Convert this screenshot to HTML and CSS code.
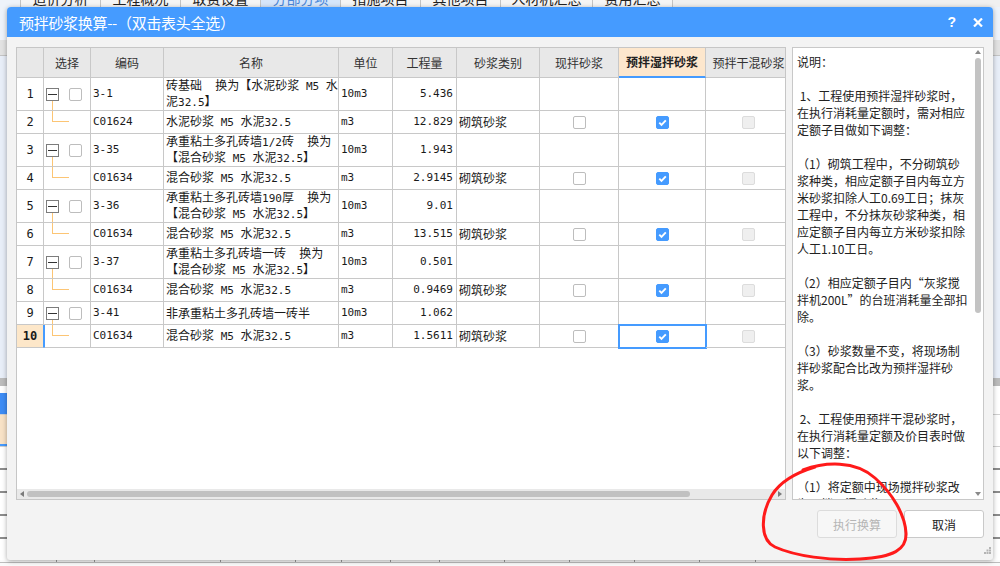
FILE: index.html
```html
<!DOCTYPE html>
<html lang="zh-CN">
<head>
<meta charset="utf-8">
<title>预拌砂浆换算</title>
<link rel="stylesheet" href="styles.css">
</head>
<body>
<div class="app">
  <div class="tabs">
    <div class="tab-row">
      <div class="tab first"></div>
      <div class="tab">造价分析</div>
      <div class="tab">工程概况</div>
      <div class="tab">取费设置</div>
      <div class="tab active">分部分项</div>
      <div class="tab">措施项目</div>
      <div class="tab">其他项目</div>
      <div class="tab wide">人材机汇总</div>
      <div class="tab">费用汇总</div>
      <div class="tab rest"></div>
    </div>
  </div>
  <div class="sheet">
    <div class="band b-top"></div>
    <div class="band b-head"></div>
    <div class="band b-tree"></div>
    <div class="band b-scroll"></div>
    <div class="band b-gap"></div>
    <div class="band b-sel"><div class="b-left"></div></div>
    <div class="band b-peach"><div class="b-left"></div></div>
    <div class="band b-row"></div>
    <div class="band b-row"></div>
    <div class="band b-row"></div>
    <div class="band b-row"></div>
    <div class="band b-row last"></div>
  </div>
  <div class="status">
    <div class="status-cells">
      <span class="sc" style="width:57px"></span>
      <span class="sc" style="width:38px"></span>
      <span class="sc" style="width:126px"></span>
      <span class="sc" style="width:75px"></span>
      <span class="sc" style="width:46px"></span>
      <span class="sc" style="width:49px"></span>
      <span class="sc" style="width:49px"></span>
      <span class="sc" style="width:65px"></span>
      <span class="sc" style="width:65px"></span>
      <span class="sc" style="width:65px"></span>
      <span class="sc" style="width:65px"></span>
      <span class="sc" style="width:56px"></span>
    </div>
  </div>
</div>

<div class="dialog">
  <div class="titlebar">
    <span class="title">预拌砂浆换算--（双击表头全选）</span>
    <span class="help">?</span>
    <svg class="close" width="10" height="9" viewBox="0 0 10 9"><path d="M1 0.5 9 8.5M9 0.5 1 8.5" stroke="#fff" stroke-width="2.2" fill="none"/></svg>
  </div>

  <div class="main">
    <div class="grid-wrap">
      <div class="row head">
        <div class="c"></div>
        <div class="c">选择</div>
        <div class="c">编码</div>
        <div class="c">名称</div>
        <div class="c">单位</div>
        <div class="c">工程量</div>
        <div class="c">砂浆类别</div>
        <div class="c">现拌砂浆</div>
        <div class="c hl">预拌湿拌砂浆</div>
        <div class="c">预拌干混砂浆</div>
      </div>

      <div class="row tall">
        <div class="c num">1</div>
        <div class="c sel parent"><span class="sp"></span><span class="boxes"><span class="minus"></span><span class="cb"></span></span><span class="stem"></span></div>
        <div class="c m">3-1</div>
        <div class="c name"><span class="t">砖基础<span class="en">  </span>换为【水泥砂浆<span class="en"> M5 </span>水<br>泥<span class="en">32.5</span>】</span></div>
        <div class="c m">10m3</div>
        <div class="c m qty">5.436</div>
        <div class="c"></div>
        <div class="c"></div>
        <div class="c"></div>
        <div class="c"></div>
      </div>

      <div class="row">
        <div class="c num">2</div>
        <div class="c sel child"><span class="elbow"></span></div>
        <div class="c m">C01624</div>
        <div class="c name"><span class="t">水泥砂浆<span class="en"> M5 </span>水泥<span class="en">32.5</span></span></div>
        <div class="c m">m3</div>
        <div class="c m qty">12.829</div>
        <div class="c type">砌筑砂浆</div>
        <div class="c chk"><span class="cb"></span></div>
        <div class="c chk"><span class="cb on"><svg width="11" height="11" viewBox="0 0 11 11"><path d="M2.3 5.6 4.5 7.8 8.8 3.3" fill="none" stroke="#fff" stroke-width="1.9"/></svg></span></div>
        <div class="c chk"><span class="cb off"></span></div>
      </div>

      <div class="row tall">
        <div class="c num">3</div>
        <div class="c sel parent"><span class="sp"></span><span class="boxes"><span class="minus"></span><span class="cb"></span></span><span class="stem"></span></div>
        <div class="c m">3-35</div>
        <div class="c name"><span class="t">承重粘土多孔砖墙<span class="en">1/2</span>砖<span class="en">  </span>换为<br>【混合砂浆<span class="en"> M5 </span>水泥<span class="en">32.5</span>】</span></div>
        <div class="c m">10m3</div>
        <div class="c m qty">1.943</div>
        <div class="c"></div>
        <div class="c"></div>
        <div class="c"></div>
        <div class="c"></div>
      </div>

      <div class="row">
        <div class="c num">4</div>
        <div class="c sel child"><span class="elbow"></span></div>
        <div class="c m">C01634</div>
        <div class="c name"><span class="t">混合砂浆<span class="en"> M5 </span>水泥<span class="en">32.5</span></span></div>
        <div class="c m">m3</div>
        <div class="c m qty">2.9145</div>
        <div class="c type">砌筑砂浆</div>
        <div class="c chk"><span class="cb"></span></div>
        <div class="c chk"><span class="cb on"><svg width="11" height="11" viewBox="0 0 11 11"><path d="M2.3 5.6 4.5 7.8 8.8 3.3" fill="none" stroke="#fff" stroke-width="1.9"/></svg></span></div>
        <div class="c chk"><span class="cb off"></span></div>
      </div>

      <div class="row tall">
        <div class="c num">5</div>
        <div class="c sel parent"><span class="sp"></span><span class="boxes"><span class="minus"></span><span class="cb"></span></span><span class="stem"></span></div>
        <div class="c m">3-36</div>
        <div class="c name"><span class="t">承重粘土多孔砖墙<span class="en">190</span>厚<span class="en">  </span>换为<br>【混合砂浆<span class="en"> M5 </span>水泥<span class="en">32.5</span>】</span></div>
        <div class="c m">10m3</div>
        <div class="c m qty">9.01</div>
        <div class="c"></div>
        <div class="c"></div>
        <div class="c"></div>
        <div class="c"></div>
      </div>

      <div class="row">
        <div class="c num">6</div>
        <div class="c sel child"><span class="elbow"></span></div>
        <div class="c m">C01634</div>
        <div class="c name"><span class="t">混合砂浆<span class="en"> M5 </span>水泥<span class="en">32.5</span></span></div>
        <div class="c m">m3</div>
        <div class="c m qty">13.515</div>
        <div class="c type">砌筑砂浆</div>
        <div class="c chk"><span class="cb"></span></div>
        <div class="c chk"><span class="cb on"><svg width="11" height="11" viewBox="0 0 11 11"><path d="M2.3 5.6 4.5 7.8 8.8 3.3" fill="none" stroke="#fff" stroke-width="1.9"/></svg></span></div>
        <div class="c chk"><span class="cb off"></span></div>
      </div>

      <div class="row tall">
        <div class="c num">7</div>
        <div class="c sel parent"><span class="sp"></span><span class="boxes"><span class="minus"></span><span class="cb"></span></span><span class="stem"></span></div>
        <div class="c m">3-37</div>
        <div class="c name"><span class="t">承重粘土多孔砖墙一砖<span class="en">  </span>换为<br>【混合砂浆<span class="en"> M5 </span>水泥<span class="en">32.5</span>】</span></div>
        <div class="c m">10m3</div>
        <div class="c m qty">0.501</div>
        <div class="c"></div>
        <div class="c"></div>
        <div class="c"></div>
        <div class="c"></div>
      </div>

      <div class="row">
        <div class="c num">8</div>
        <div class="c sel child"><span class="elbow"></span></div>
        <div class="c m">C01634</div>
        <div class="c name"><span class="t">混合砂浆<span class="en"> M5 </span>水泥<span class="en">32.5</span></span></div>
        <div class="c m">m3</div>
        <div class="c m qty">0.9469</div>
        <div class="c type">砌筑砂浆</div>
        <div class="c chk"><span class="cb"></span></div>
        <div class="c chk"><span class="cb on"><svg width="11" height="11" viewBox="0 0 11 11"><path d="M2.3 5.6 4.5 7.8 8.8 3.3" fill="none" stroke="#fff" stroke-width="1.9"/></svg></span></div>
        <div class="c chk"><span class="cb off"></span></div>
      </div>

      <div class="row">
        <div class="c num">9</div>
        <div class="c sel parent"><span class="sp"></span><span class="boxes"><span class="minus"></span><span class="cb"></span></span><span class="stem"></span></div>
        <div class="c m">3-41</div>
        <div class="c name"><span class="t">非承重粘土多孔砖墙一砖半</span></div>
        <div class="c m">10m3</div>
        <div class="c m qty">1.062</div>
        <div class="c"></div>
        <div class="c"></div>
        <div class="c"></div>
        <div class="c"></div>
      </div>

      <div class="row current">
        <div class="c num">10</div>
        <div class="c sel child"><span class="elbow"></span></div>
        <div class="c m">C01634</div>
        <div class="c name"><span class="t">混合砂浆<span class="en"> M5 </span>水泥<span class="en">32.5</span></span></div>
        <div class="c m">m3</div>
        <div class="c m qty">1.5611</div>
        <div class="c type">砌筑砂浆</div>
        <div class="c chk"><span class="cb"></span></div>
        <div class="c chk focus"><span class="cb on"><svg width="11" height="11" viewBox="0 0 11 11"><path d="M2.3 5.6 4.5 7.8 8.8 3.3" fill="none" stroke="#fff" stroke-width="1.9"/></svg></span></div>
        <div class="c chk"><span class="cb off"></span></div>
      </div>

      <div class="filler"></div>
      <div class="hscroll">
        <span class="arr-l"></span>
        <span class="hthumb"></span>
        <span class="flex1"></span>
        <span class="arr-r"></span>
      </div>
    </div>

    <div class="notes">
      <div class="notes-text">
        <p>说明：</p>
        <p>&nbsp;1、工程使用预拌湿拌砂浆时，<br>在执行消耗量定额时，需对相应<br>定额子目做如下调整：</p>
        <p>（1）砌筑工程中，不分砌筑砂<br>浆种类，相应定额子目内每立方<br>米砂浆扣除人工0.69工日；抹灰<br>工程中，不分抹灰砂浆种类，相<br>应定额子目内每立方米砂浆扣除<br>人工1.10工日。</p>
        <p>（2）相应定额子目内“灰浆搅<br>拌机200L”的台班消耗量全部扣<br>除。</p>
        <p>（3）砂浆数量不变，将现场制<br>拌砂浆配合比改为预拌湿拌砂<br>浆。</p>
        <p>&nbsp;2、工程使用预拌干混砂浆时，<br>在执行消耗量定额及价目表时做<br>以下调整：</p>
        <p>（1）将定额中现场搅拌砂浆改<br>为预拌干混砂浆。</p>
      </div>
      <div class="vscroll">
        <span class="arr-u"></span>
        <span class="vthumb"></span>
        <span class="flex1"></span>
        <span class="arr-d"></span>
      </div>
    </div>
  </div>

  <div class="actions">
    <button class="btn disabled">执行换算</button>
    <button class="btn">取消</button>
  </div>
  <div class="footer">
    <svg class="grip" width="7" height="7" viewBox="0 0 7 7">
      <rect x="5" y="0" width="2" height="2" fill="#b4b4b4"/>
      <rect x="2.5" y="2.5" width="2" height="2" fill="#b4b4b4"/>
      <rect x="5" y="2.5" width="2" height="2" fill="#b4b4b4"/>
      <rect x="0" y="5" width="2" height="2" fill="#b4b4b4"/>
      <rect x="2.5" y="5" width="2" height="2" fill="#b4b4b4"/>
      <rect x="5" y="5" width="2" height="2" fill="#b4b4b4"/>
    </svg>
  </div>
</div>

<svg class="annot" width="1000" height="566" viewBox="0 0 1000 566">
  <path d="M803 470 C825 462 855 460 875 478 C893 494 905 515 906 533 C907 550 893 557 860 559 C830 561 795 556 775 547 C760 540 760 515 772 495 C780 482 795 473 815 467" fill="none" stroke="#ff1a1a" stroke-width="3" stroke-linecap="round"/>
</svg>
</body>
</html>
```

FILE: styles.css
```css
html, body {
  margin: 0;
  padding: 0;
}
body {
  width: 1000px;
  height: 566px;
  overflow: hidden;
  position: relative;
  font-family: "Noto Sans CJK SC", sans-serif;
  background: #fff;
  color: #1a1a1a;
}

/* ---------- background application ---------- */
.app {
  display: flex;
  flex-direction: column;
  height: 566px;
}
.tabs {
  height: 7px;
  overflow: hidden;
  background: #f0f0f0;
  flex-shrink: 0;
}
.tab-row {
  display: flex;
  margin-top: -12px;
  height: 20px;
}
.tab {
  width: 80px;
  flex-shrink: 0;
  box-sizing: border-box;
  border-right: 1px solid #c4c4c4;
  text-align: center;
  font-size: 14px;
  line-height: 20px;
  color: #222;
  background: #f5f5f5;
}
.tab.first { width: 21px; background: #eef3fa; }
.tab.wide { width: 92px; }
.tab.active { background: #d6e6fa; color: #4a86d8; }
.tab.rest { flex: 1; border-right: 0; background: #f0f0f0; }

.sheet {
  display: flex;
  flex-direction: column;
  flex-shrink: 0;
}
.band { flex-shrink: 0; box-sizing: border-box; }
.b-top { height: 33px; background: #eef3fa; }
.b-head { height: 16px; background: #e2e2e2; border-bottom: 1px solid #c4c4c4; }
.b-tree { height: 322px; background: #e8eef8; }
.b-scroll { height: 8px; background: #bcbcbc; }
.b-gap { height: 7px; background: #fff; }
.b-sel { height: 22px; background: #fff; border-bottom: 1px solid #d0d0d0; }
.b-sel .b-left { width: 60px; height: 100%; background: #3d8cf5; }
.b-peach { height: 32px; background: #fff; border-bottom: 1px solid #d0d0d0; }
.b-peach .b-left {
  width: 60px;
  height: 100%;
  box-sizing: border-box;
  background: #f8e2c6;
  border-bottom: 2px solid #459bff;
}
.b-row { height: 23px; background: #fff; border-bottom: 2px solid #8c8c8c; }
.b-row.last { height: 21px; border-bottom: 0; }

.status {
  height: 6px;
  background: #fafafa;
  flex-shrink: 0;
}
.status-cells {
  display: flex;
  height: 2px;
  border-bottom: 1px solid #bdbdbd;
}
.sc {
  flex-shrink: 0;
  box-sizing: border-box;
  border-right: 1px solid #9a9a9a;
}

/* ---------- dialog window ---------- */
.dialog {
  position: absolute;
  left: 7px;
  top: 7px;
  width: 986px;
  height: 553px;
  background: #f3f3f3;
  border-radius: 4px 4px 3px 3px;
  box-shadow: 0 1px 5px rgba(0, 0, 0, 0.35);
  display: flex;
  flex-direction: column;
  overflow: hidden;
}
.titlebar {
  height: 30px;
  flex-shrink: 0;
  background: #459bff;
  color: #fff;
  display: flex;
  align-items: center;
  padding: 0 10px 0 12px;
}
.title {
  flex: 1;
  font-size: 15px;
  letter-spacing: -0.3px;
}
.help {
  font: bold 14px "Liberation Sans", sans-serif;
  margin-right: 17px;
}
.close { display: block; }

.main {
  display: flex;
  gap: 6px;
  padding: 10px 9px 0;
  height: 453px;
  flex-shrink: 0;
}

/* ---------- grid ---------- */
.grid-wrap {
  width: 770px;
  height: 453px;
  box-sizing: border-box;
  border: 1px solid #c6c6c6;
  background: #fff;
  display: flex;
  flex-direction: column;
  overflow: hidden;
  flex-shrink: 0;
}
.row {
  display: grid;
  grid-template-columns: 27px 47px 73px 175px 54px 64px 83px 79px 87px 86px;
  width: 775px;
  height: 23px;
  flex-shrink: 0;
  font-size: 12px;
  line-height: 14px;
}
.row.tall { height: 33px; }
.row.head { height: 30px; background: #e8e8e8; color: #333; }
.c {
  box-sizing: border-box;
  border-right: 1px solid #c8c8c8;
  border-bottom: 1px solid #c8c8c8;
  display: flex;
  align-items: center;
  padding: 0 2px;
  overflow: hidden;
  white-space: nowrap;
}
.head .c { justify-content: center; padding: 0; }
.head .c.hl {
  background: #fde7cd;
  font-weight: bold;
  color: #222;
  border-bottom: 2px solid #459bff;
}
.m {
  font-family: "DejaVu Sans Mono", monospace;
  font-size: 11px;
}
.en {
  font-family: "DejaVu Sans Mono", monospace;
  font-size: 11px;
  white-space: pre;
}
.num {
  justify-content: center;
  font-family: "DejaVu Sans Mono", monospace;
  font-size: 12px;
}
.qty { justify-content: flex-end; padding-right: 3px; }
.name .t { display: block; }
.chk { justify-content: center; }

.current .num {
  background: #fde7c9;
  font-weight: bold;
  border-right-color: #459bff;
}
.current .sel { border-left: 1px solid #459bff; }
.current .sel .elbow { margin-left: 7px; }
.chk.focus {
  outline: 2px solid #459bff;
  outline-offset: -1px;
}

/* select column: tree */
.sel { padding: 0; align-items: stretch; }
.sel.parent {
  flex-direction: column;
  padding-left: 2px;
}
.sel.parent .sp, .sel.parent .stem { flex: 1; }
.sel.parent .stem {
  width: 0;
  margin-left: 6px;
  border-left: 1px solid #fcc574;
}
.boxes {
  display: flex;
  height: 13px;
  flex-shrink: 0;
}
.minus {
  width: 13px;
  height: 13px;
  box-sizing: border-box;
  border: 1px solid #7c7c7c;
  background: #fff;
  display: flex;
  align-items: center;
  justify-content: center;
}
.minus::before {
  content: "";
  width: 9px;
  height: 1px;
  background: #333;
}
.boxes .cb { margin-left: 10px; }
.sel.child { align-items: flex-start; }
.elbow {
  display: block;
  box-sizing: border-box;
  margin-left: 8px;
  width: 17px;
  height: 11px;
  border-left: 1px solid #fcc574;
  border-bottom: 1px solid #fcc574;
}

/* checkboxes */
.cb {
  width: 13px;
  height: 13px;
  box-sizing: border-box;
  border: 1px solid #bdbdbd;
  border-radius: 2px;
  background: #fff;
  display: flex;
  align-items: center;
  justify-content: center;
  flex-shrink: 0;
}
.cb.on { background: #459bff; border-color: #459bff; }
.cb.off { background: #efefef; border-color: #dcdcdc; }
.cb svg { display: block; }

.filler { flex: 1; }
.flex1 { flex: 1; }

/* horizontal scrollbar */
.hscroll {
  height: 10px;
  flex-shrink: 0;
  background: #e9e9e9;
  display: flex;
  align-items: center;
  padding: 0 3px;
}
.arr-l {
  width: 0;
  height: 0;
  border-top: 3.5px solid transparent;
  border-bottom: 3.5px solid transparent;
  border-right: 4px solid #7a7a7a;
}
.arr-r {
  width: 0;
  height: 0;
  border-top: 3.5px solid transparent;
  border-bottom: 3.5px solid transparent;
  border-left: 4px solid #7a7a7a;
}
.hthumb {
  margin-left: 3px;
  width: 663px;
  height: 6px;
  border-radius: 3px;
  background: #c1c1c1;
}

/* ---------- notes panel ---------- */
.notes {
  width: 192px;
  height: 453px;
  box-sizing: border-box;
  border: 1px solid #c8c8c8;
  background: #fff;
  display: flex;
  flex-shrink: 0;
}
.notes-text {
  flex: 1;
  overflow: hidden;
  padding: 5px 0 0 4px;
  font-size: 12px;
  line-height: 17px;
  color: #222;
  white-space: nowrap;
}
.notes-text p { margin: 0 0 17px; }
.vscroll {
  width: 11px;
  flex-shrink: 0;
  display: flex;
  flex-direction: column;
  align-items: center;
  padding: 2px 0 3px;
  box-sizing: border-box;
}
.arr-u {
  width: 0;
  height: 0;
  border-left: 3.5px solid transparent;
  border-right: 3.5px solid transparent;
  border-bottom: 4px solid #8a8a8a;
}
.arr-d {
  width: 0;
  height: 0;
  border-left: 3.5px solid transparent;
  border-right: 3.5px solid transparent;
  border-top: 4px solid #8a8a8a;
}
.vthumb {
  margin-top: 4px;
  width: 6px;
  height: 255px;
  border-radius: 3px;
  background: #c3c3c3;
}

/* ---------- buttons ---------- */
.actions {
  display: flex;
  justify-content: flex-end;
  gap: 7px;
  padding: 10px 9px 0;
  flex-shrink: 0;
}
.btn {
  width: 80px;
  height: 28px;
  box-sizing: border-box;
  border: 1px solid #c9c9c9;
  border-radius: 3px;
  background: #fff;
  font-family: "Noto Sans CJK SC", sans-serif;
  font-size: 12px;
  color: #222;
  padding: 0;
}
.btn.disabled {
  background: #f7f7f7;
  border-color: #dcdcdc;
  color: #b5b5b5;
}
.footer {
  flex: 1;
  display: flex;
  justify-content: flex-end;
  align-items: flex-end;
  padding: 0 2px 6px;
}
.grip { display: block; }

/* ---------- annotation ---------- */
.annot {
  position: absolute;
  left: 0;
  top: 0;
  pointer-events: none;
}
```
